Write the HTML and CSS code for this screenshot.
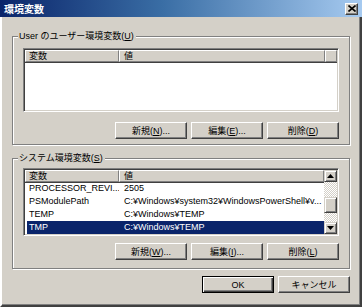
FILE: index.html
```html
<!DOCTYPE html>
<html lang="ja">
<head>
<meta charset="utf-8">
<link rel="stylesheet" href="styles.css">
</head>
<body>
<div class="window">
  <div class="titlebar">
    <span class="title">環境変数</span>
    <span class="close"><svg width="8" height="7" viewBox="0 0 8 7"><path d="M0.5 0.5 L7.5 6.5 M7.5 0.5 L0.5 6.5" stroke="#000" stroke-width="1.6" fill="none"/></svg></span>
  </div>
  <div class="client">
    <section class="group g-user">
      <span class="legend">User のユーザー環境変数(<u>U</u>)</span>
      <div class="listview lv-user">
        <div class="lv-main">
          <div class="lv-header">
            <span class="hcol c1">変数</span><span class="hcol c2">値</span><span class="hcol filler"></span>
          </div>
        </div>
      </div>
      <div class="btnrow">
        <button class="btn">新規(<u>N</u>)...</button>
        <button class="btn">編集(<u>E</u>)...</button>
        <button class="btn">削除(<u>D</u>)</button>
      </div>
    </section>

    <section class="group g-sys">
      <span class="legend">システム環境変数(<u>S</u>)</span>
      <div class="listview lv-sys">
        <div class="lv-main">
          <div class="lv-header">
            <span class="hcol c1">変数</span><span class="hcol c2 grow">値</span>
          </div>
          <div class="lv-rows">
            <div class="row"><span class="cell c1">PROCESSOR_REVI...</span><span class="cell c2">2505</span></div>
            <div class="row"><span class="cell c1">PSModulePath</span><span class="cell c2">C:¥Windows¥system32¥WindowsPowerShell¥v...</span></div>
            <div class="row"><span class="cell c1">TEMP</span><span class="cell c2">C:¥Windows¥TEMP</span></div>
            <div class="row selected"><span class="cell c1">TMP</span><span class="cell c2">C:¥Windows¥TEMP</span></div>
          </div>
        </div>
        <div class="vscroll">
          <span class="sbtn"><svg width="7" height="4" viewBox="0 0 7 4"><path d="M3.5 0 L7 4 L0 4 Z" fill="#000"/></svg></span>
          <span class="track">
            <span class="thumb"></span>
          </span>
          <span class="sbtn"><svg width="7" height="4" viewBox="0 0 7 4"><path d="M0 0 L7 0 L3.5 4 Z" fill="#000"/></svg></span>
        </div>
      </div>
      <div class="btnrow">
        <button class="btn">新規(<u>W</u>)...</button>
        <button class="btn">編集(<u>I</u>)...</button>
        <button class="btn">削除(<u>L</u>)</button>
      </div>
    </section>

    <div class="dlgbtns">
      <button class="btn default">OK</button>
      <button class="btn">キャンセル</button>
    </div>
  </div>
</div>
</body>
</html>
```
FILE: styles.css
```css
* { box-sizing: border-box; }
html, body { margin: 0; padding: 0; }
body {
  width: 362px;
  height: 307px;
  overflow: hidden;
  background: #d4d0c8;
  font-family: "Liberation Sans", "Noto Sans CJK JP", sans-serif;
  font-size: 9px;
  color: #000;
}
.window {
  width: 362px;
  height: 307px;
  display: flex;
  flex-direction: column;
  background: #d4d0c8;
}
.titlebar {
  height: 17px;
  flex: none;
  display: flex;
  align-items: center;
  justify-content: space-between;
  padding: 0 4px 0 4px;
  background: linear-gradient(to right, #0a246a 0%, #3a6ea5 45%, #a6caf0 100%);
}
.title {
  color: #fff;
  font-weight: bold;
  font-size: 10px;
  line-height: 12px;
  font-family: "Noto Sans CJK JP", sans-serif;
}
.close {
  width: 13px;
  height: 12px;
  display: flex;
  align-items: center;
  justify-content: center;
  background: #d4d0c8;
  border: 1px solid;
  border-color: #fff #404040 #404040 #fff;
  box-shadow: inset -1px -1px #808080;
}
.client {
  flex: 1;
  border-left: 2px solid #fff;
  border-right: 2px solid #404040;
  border-bottom: 2px solid #404040;
  box-shadow: inset -1px -1px #808080;
  padding: 19px 10px 0 10px;
  display: flex;
  flex-direction: column;
}
.group {
  position: relative;
  border: 1px solid #808080;
  box-shadow: inset 1px 1px #fff, 1px 1px #fff;
  display: flex;
  flex-direction: column;
  padding: 11px 10px 5px 10px;
}
.g-sys {
  margin-top: 13px;
  padding: 9px 10px 8px 10px;
}
.legend {
  position: absolute;
  top: -7px;
  left: 5px;
  padding: 0 2px 0 1px;
  background: #d4d0c8;
  line-height: 13px;
  font-size: 9px;
}
.listview {
  background: #fff;
  border: 1px solid;
  border-color: #808080 #fff #fff #808080;
  box-shadow: inset 1px 1px #404040, inset -1px -1px #d4d0c8;
  padding: 1px;
  display: flex;
}
.lv-user { height: 64px; }
.lv-sys { height: 68px; }
.lv-main {
  flex: 1;
  display: flex;
  flex-direction: column;
  min-width: 0;
}
.lv-header {
  display: flex;
  height: 12px;
  flex: none;
}
.hcol {
  height: 12px;
  line-height: 11px;
  background: #d4d0c8;
  border-top: 1px solid #fff;
  border-left: 1px solid #fff;
  border-right: 1px solid #808080;
  border-bottom: 1px solid #808080;
  box-shadow: 0 1px #404040;
  padding-left: 3px;
  white-space: nowrap;
}
.hcol.c1 { width: 94px; }
.hcol.c2 { width: 206px; padding-left: 4px; }
.hcol.grow { flex: 1; width: auto; }
.hcol.filler { flex: 1; }
.lv-rows {
  display: flex;
  flex-direction: column;
  padding: 0 0 0 2px;
}
.row {
  display: flex;
  height: 13px;
  line-height: 13px;
  white-space: nowrap;
}
.row .cell { overflow: hidden; }
.row .c1 { width: 92px; padding-left: 2px; }
.row .c2 { flex: 1; padding-left: 5px; }
.row.selected {
  background: #0a246a;
  color: #fff;
}
.vscroll {
  width: 13px;
  flex: none;
  display: flex;
  flex-direction: column;
}
.sbtn {
  height: 12px;
  flex: none;
  display: flex;
  align-items: center;
  justify-content: center;
  background: #d4d0c8;
  border: 1px solid;
  border-color: #d4d0c8 #404040 #404040 #d4d0c8;
  box-shadow: inset 1px 1px #fff, inset -1px -1px #808080;
}
.track {
  flex: 1;
  display: flex;
  flex-direction: column;
  justify-content: flex-end;
  background-color: #f4f3ef;
  background-image: repeating-conic-gradient(#d4d0c8 0 25%, #ffffff 0 50%);
  background-size: 2px 2px;
}
.thumb {
  height: 16px;
  margin-bottom: 9px;
  background: #d4d0c8;
  border: 1px solid;
  border-color: #d4d0c8 #404040 #404040 #d4d0c8;
  box-shadow: inset 1px 1px #fff, inset -1px -1px #808080;
}
.btnrow {
  display: flex;
  justify-content: flex-end;
  gap: 4px;
  margin-top: 10px;
}
.g-sys .btnrow { margin-top: 7px; }
.btn {
  width: 72px;
  height: 17px;
  margin: 0;
  padding: 0;
  font: inherit;
  color: #000;
  background: #d4d0c8;
  border: 1px solid;
  border-color: #fff #404040 #404040 #fff;
  box-shadow: inset -1px -1px #808080;
  line-height: 14px;
  text-align: center;
}
.btn u { text-underline-offset: 1px; }
.btn.default {
  border: 1px solid #000;
  box-shadow: inset 1px 1px #fff, inset -1px -1px #404040, inset -2px -2px #808080;
}
.dlgbtns {
  display: flex;
  justify-content: flex-end;
  gap: 4px;
  margin-top: 7px;
}
```
